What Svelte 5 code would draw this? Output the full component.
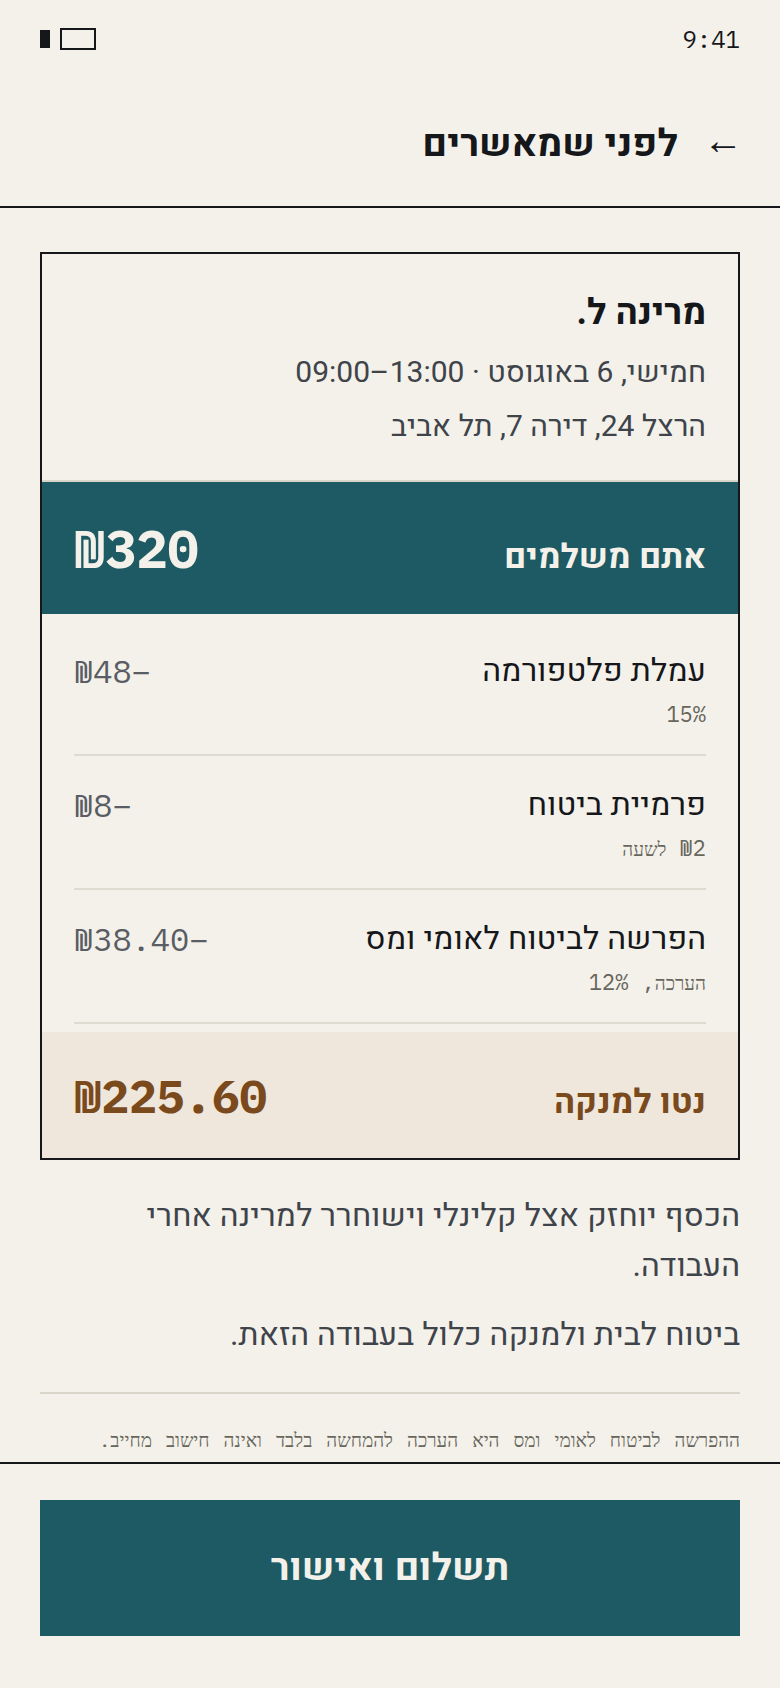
<script>
	const rows = [
		{ label: 'עמלת פלטפורמה', note: [{ text: '15%' }], amount: '−₪48' },
		{ label: 'פרמיית ביטוח', note: [{ text: '₪2 ' }, { text: 'לשעה', he: true }], amount: '−₪8' },
		{ label: 'הפרשה לביטוח לאומי ומס', note: [{ text: 'הערכה', he: true }, { text: ', 12%' }], amount: '−₪38.40' }
	];
</script>

<div class="screen" dir="rtl">
	<div class="status">
		<span class="time">9:41</span>
		<div class="signal">
			<span class="box"></span>
			<span class="bar"></span>
		</div>
	</div>

	<header>
		<span class="arrow">←</span>
		<h1>לפני שמאשרים</h1>
	</header>

	<main>
		<section class="card">
			<div class="who">
				<h2>מרינה ל.</h2>
				<p>חמישי, 6 באוגוסט · <bdi dir="ltr">09:00–13:00</bdi></p>
				<p>הרצל 24, דירה 7, תל אביב</p>
			</div>
			<div class="pay">
				<span class="pay-label">אתם משלמים</span>
				<span class="pay-num">₪320</span>
			</div>
			<div class="rows">
				{#each rows as row}
					<div class="row">
						<div>
							<div class="row-label">{row.label}</div>
							<div class="row-note">
								{#each row.note as part}<span class:he={part.he}>{part.text}</span>{/each}
							</div>
						</div>
						<span class="row-amount">{row.amount}</span>
					</div>
				{/each}
			</div>
			<div class="net">
				<span class="net-label">נטו למנקה</span>
				<span class="net-num">₪225.60</span>
			</div>
		</section>

		<p class="info">הכסף יוחזק אצל קלינלי וישוחרר למרינה אחרי העבודה.</p>
		<p class="info second">ביטוח לבית ולמנקה כלול בעבודה הזאת.</p>
		<p class="fine">ההפרשה לביטוח לאומי ומס היא הערכה להמחשה בלבד ואינה חישוב מחייב.</p>
	</main>

	<footer>
		<button>תשלום ואישור</button>
	</footer>
</div>

<style>
	:global(body) {
		background: #f4f1ea;
	}
	.screen {
		height: 1688px;
		display: flex;
		flex-direction: column;
		overflow: hidden;
		background: #f4f1ea;
		color: #15171a;
		font-family: Heebo, Roboto, sans-serif;
	}
	.status {
		height: 78px;
		flex: none;
		display: flex;
		justify-content: space-between;
		align-items: center;
		padding: 0 40px;
	}
	.time {
		font: 24px 'IBM Plex Mono', monospace;
	}
	.signal {
		display: flex;
		align-items: center;
		gap: 10px;
	}
	.box {
		width: 36px;
		height: 22px;
		box-sizing: border-box;
		border: 2px solid #15171a;
	}
	.bar {
		width: 10px;
		height: 18px;
		background: #15171a;
	}
	header {
		flex: none;
		height: 130px;
		box-sizing: border-box;
		display: flex;
		align-items: center;
		gap: 25px;
		padding: 4px 37px 0 40px;
		border-bottom: 2px solid #15171a;
	}
	.arrow {
		font-size: 40px;
		line-height: 1;
		margin-top: -4px;
	}
	h1 {
		margin: 0;
		font-size: 38px;
		font-weight: 700;
	}
	main {
		flex: 1;
		min-height: 0;
		overflow: hidden;
		padding: 44px 40px 0;
	}
	.card {
		border: 2px solid #15171a;
	}
	.who {
		padding: 32px 32px 26px;
		border-bottom: 2px solid #d9d5c9;
	}
	h2 {
		margin: 0 0 6px;
		font-size: 36px;
		font-weight: 700;
		line-height: 54px;
	}
	.who p {
		margin: 0;
		font-size: 30px;
		line-height: 54px;
		color: #3f444b;
	}
	.pay {
		background: #1d5a63;
		color: #f4f1ea;
		display: flex;
		justify-content: space-between;
		align-items: baseline;
		padding: 33px 32px 32px;
	}
	.pay-label {
		font-size: 34px;
		font-weight: 700;
	}
	.pay-num {
		font: 700 52px 'IBM Plex Mono', monospace;
	}
	.rows {
		padding: 8px 32px;
	}
	.row {
		display: flex;
		justify-content: space-between;
		align-items: flex-start;
		height: 134px;
		box-sizing: border-box;
		padding-top: 25px;
		border-bottom: 2px solid #dedbd0;
	}
	.row-label {
		font-size: 32px;
		line-height: 48px;
	}
	.row-note {
		font: 22px/38px 'IBM Plex Mono', monospace;
		color: #67665c;
	}
	.he {
		font-size: 19px;
	}
	.row-amount {
		font: 32px/48px 'IBM Plex Mono', monospace;
		color: #5a5d63;
	}
	.net {
		background: #efe7dc;
		color: #7a4a1c;
		display: flex;
		justify-content: space-between;
		align-items: baseline;
		padding: 34px 32px 31px;
	}
	.net-label {
		font-size: 34px;
		font-weight: 700;
	}
	.net-num {
		font: 700 46px 'IBM Plex Mono', monospace;
	}
	.info {
		margin: 31px 0 0;
		font-size: 32px;
		line-height: 1.55;
		color: #3f444b;
	}
	.second {
		margin-top: 20px;
	}
	.fine {
		margin: 32px 0 0;
		padding-top: 31px;
		border-top: 2px solid #d9d5c9;
		font: 19px/30px 'IBM Plex Mono', monospace;
		word-spacing: 2.6px;
		color: #67665c;
	}
	footer {
		flex: none;
		border-top: 2px solid #15171a;
		padding: 36px 40px 52px;
	}
	button {
		display: block;
		width: 100%;
		height: 136px;
		border: 0;
		background: #1d5a63;
		color: #f4f1ea;
		font-family: inherit;
		font-size: 38px;
		font-weight: 700;
	}
</style>
